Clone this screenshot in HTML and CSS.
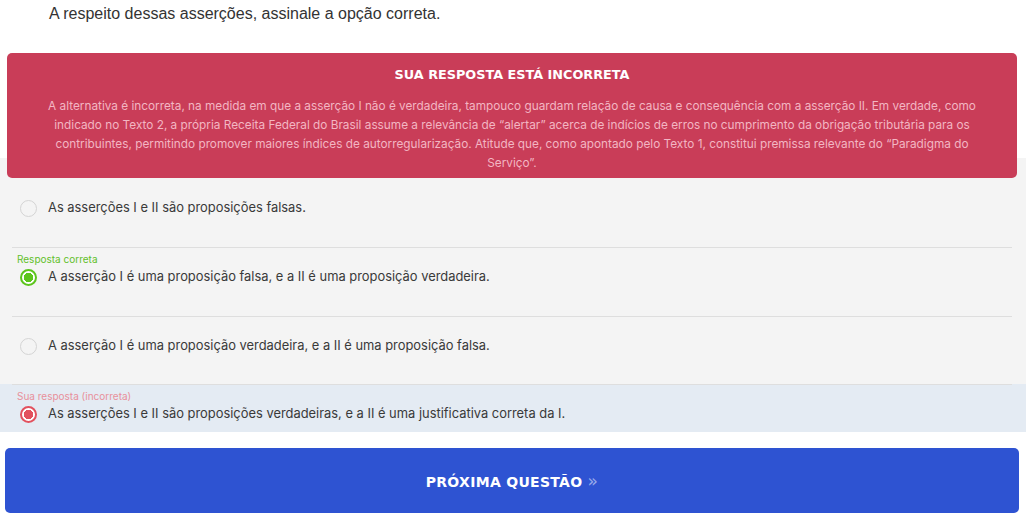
FILE: index.html
```html
<!DOCTYPE html>
<html lang="pt-BR">
<head>
<meta charset="utf-8">
<link rel="stylesheet" href="styles.css">
</head>
<body>
<p class="prompt">A respeito dessas asserções, assinale a opção correta.</p>

<div class="feedback">
  <h2 class="feedback-title">SUA RESPOSTA ESTÁ INCORRETA</h2>
  <p class="feedback-text">A alternativa é incorreta, na medida em que a asserção I não é verdadeira, tampouco guardam relação de causa e consequência com a asserção II. Em verdade, como indicado no Texto 2, a própria Receita Federal do Brasil assume a relevância de “alertar” acerca de indícios de erros no cumprimento da obrigação tributária para os contribuintes, permitindo promover maiores índices de autorregularização. Atitude que, como apontado pelo Texto 1, constitui premissa relevante do “Paradigma do Serviço”.</p>
</div>

<div class="options">
  <div class="opt">
    <div class="opt-inner first">
      <div class="opt-label"></div>
      <div class="opt-row"><span class="radio"></span><span class="opt-text">As asserções I e II são proposições falsas.</span></div>
    </div>
  </div>
  <div class="opt">
    <div class="opt-inner">
      <div class="opt-label correct">Resposta correta</div>
      <div class="opt-row"><span class="radio radio-correct"></span><span class="opt-text">A asserção I é uma proposição falsa, e a II é uma proposição verdadeira.</span></div>
    </div>
  </div>
  <div class="opt">
    <div class="opt-inner short">
      <div class="opt-label"></div>
      <div class="opt-row"><span class="radio"></span><span class="opt-text">A asserção I é uma proposição verdadeira, e a II é uma proposição falsa.</span></div>
    </div>
  </div>
  <div class="opt opt-mine">
    <div class="opt-inner last">
      <div class="opt-label wrong">Sua resposta (incorreta)</div>
      <div class="opt-row"><span class="radio radio-wrong"></span><span class="opt-text">As asserções I e II são proposições verdadeiras, e a II é uma justificativa correta da I.</span></div>
    </div>
  </div>
</div>

<button class="next">PRÓXIMA QUESTÃO <span class="chev">»</span></button>
</body>
</html>
```

FILE: styles.css
```css
* { box-sizing: border-box; }
body {
  margin: 0;
  background: #ffffff;
  font-family: "Inter", "Noto Sans", sans-serif;
}
.prompt {
  margin: 0;
  padding: 5px 0 0 49px;
  height: 53px;
  font-family: "Liberation Sans", Arial, sans-serif;
  font-size: 16px;
  line-height: 18px;
  color: #333333;
}
.feedback {
  position: relative;
  z-index: 1;
  margin: 0 9px -20px 7px;
  height: 125px;
  background: #c93d58;
  border-radius: 5px;
  padding: 14px 36px 0;
  text-align: center;
}
.feedback-title {
  margin: 0 0 14px;
  font-family: "DejaVu Sans", sans-serif;
  font-weight: bold;
  font-size: 12.8px;
  line-height: 16px;
  color: #ffffff;
}
.feedback-text {
  margin: 0;
  font-size: 11.8px;
  line-height: 19px;
  color: #f3b6c3;
}
.options {
  background: #f4f4f4;
  padding-top: 20px;
}
.opt-inner {
  margin: 0 14px 0 12px;
  border-top: 1px solid #dedede;
  height: 69px;
  padding: 5px 0 0 8px;
}
.opt-inner.first { border-top: none; height: 69px; padding-top: 6px; }
.opt-inner.short { height: 68px; }
.opt-inner.last { height: 48px; }
.opt-mine { background: #e4ebf3; }
.opt-label {
  height: 12px;
  font-size: 10px;
  line-height: 12px;
  margin-left: -3px;
}
.opt-label.correct { color: #62c02a; }
.opt-label.wrong { color: #e8909b; }
.opt-row {
  display: flex;
  align-items: center;
  gap: 11px;
  margin-top: 2px;
  height: 20px;
}
.radio {
  flex: none;
  width: 17px;
  height: 17px;
  border-radius: 50%;
  border: 1px solid #d4d4d4;
  background: #f4f4f4;
}
.radio-correct {
  border: 2px solid #5cc51c;
  background: radial-gradient(circle, #5cc51c 0 4.5px, #ffffff 5px);
}
.radio-wrong {
  border: 2px solid #e2515e;
  background: radial-gradient(circle, #e2515e 0 4.5px, #ffffff 5px);
}
.opt-text {
  font-size: 12.9px;
  color: #3a3a3a;
  line-height: 20px;
}
.next {
  display: block;
  margin: 16px 7px 0 5px;
  width: calc(100% - 12px);
  height: 65px;
  border: none;
  border-radius: 5px;
  background: #2e53d2;
  color: #ffffff;
  font-family: "DejaVu Sans", sans-serif;
  font-weight: bold;
  font-size: 14px;
  letter-spacing: 0.3px;
}
.chev {
  color: #97a9ea;
  font-weight: normal;
  font-size: 17px;
}
```
